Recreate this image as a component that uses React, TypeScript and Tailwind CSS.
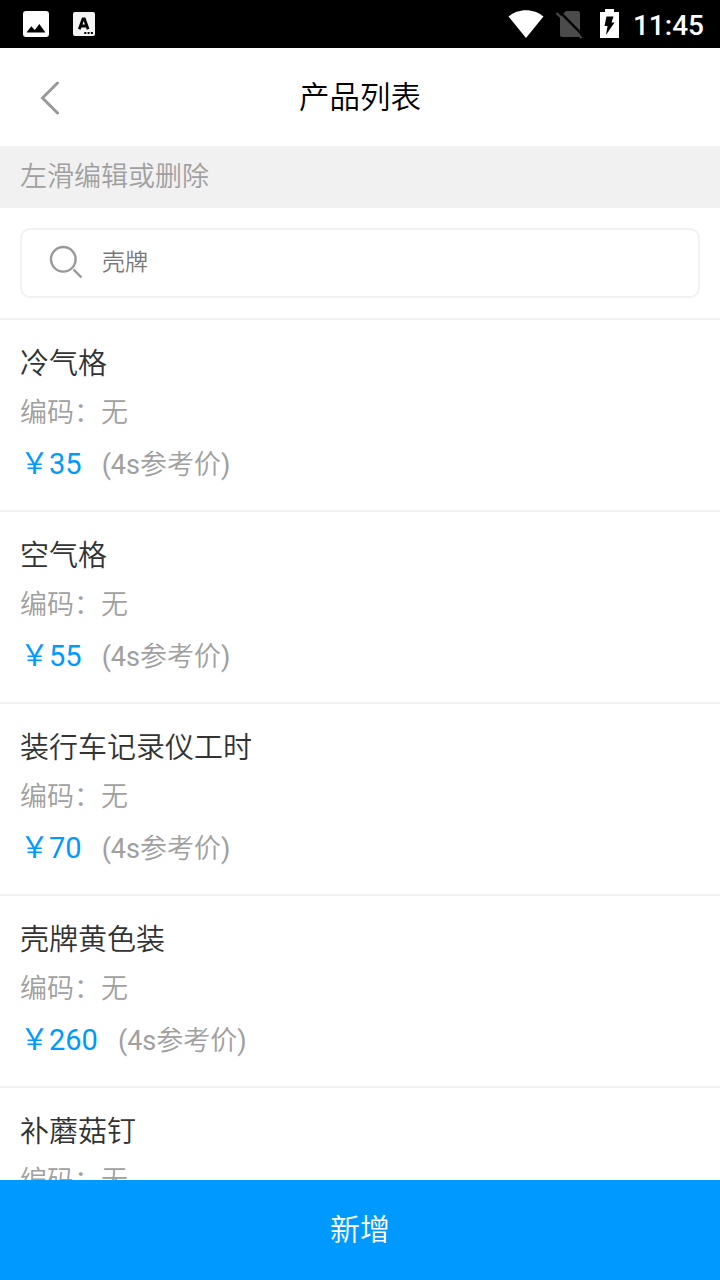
import { useState } from "react";

interface Product {
  id: number;
  name: string;
  code?: string;
  price: number;
}

const products: Product[] = [
  { id: 1, name: "冷气格", price: 35 },
  { id: 2, name: "空气格", price: 55 },
  { id: 3, name: "装行车记录仪工时", price: 70 },
  { id: 4, name: "壳牌黄色装", price: 260 },
  { id: 5, name: "补蘑菇钉", price: 120 },
];

const StatusBar = () => (
  <div className="flex h-12 shrink-0 items-center justify-between bg-black">
    <div className="flex items-center pl-[23px]">
      <svg width="26" height="26" viewBox="0 0 26 26">
        <rect width="26" height="26" rx="3" fill="#fff" />
        <path d="M3.5 21.5 8.3 15.2 11.8 19 16.3 13 22.5 21.5Z" fill="#000" />
      </svg>
      <svg className="ml-[24px]" width="22" height="24" viewBox="0 0 22 24">
        <rect width="22" height="24" rx="2" fill="#f4f4f4" />
        <path
          d="M6.3 17.3 10 6.8h1.4l3.7 10.5M7.5 14h6.5"
          fill="none"
          stroke="#000"
          strokeWidth="2.8"
        />
        <path d="M11.3 20h2v2h-2zM14.6 20h2v2h-2zM17.9 20h2v2h-2z" fill="#000" />
      </svg>
    </div>

    <div className="flex items-center pr-4">
      <svg width="36" height="30" viewBox="0 0 36 30">
        <path d="M.5 7.5C10-1 26-1 35.5 7.5L18 29Z" fill="#fff" />
      </svg>
      <svg className="ml-[11px]" width="28" height="30" viewBox="0 0 28 30">
        <path
          d="M11 2h11.5a2.5 2.5 0 0 1 2.5 2.5v21a2.5 2.5 0 0 1-2.5 2.5H7.5A2.5 2.5 0 0 1 5 25.5V8z"
          fill="#4b4b4b"
        />
        <path d="M3.5 1.5 28 26.5" stroke="#000" strokeWidth="2.5" />
        <path d="M1.5 4 26.5 29" stroke="#4b4b4b" strokeWidth="2.2" />
      </svg>
      <svg className="ml-[17px]" width="19" height="30" viewBox="0 0 19 30">
        <path d="M5 0h9v3h5v26H0V3h5z" fill="#fff" />
        <path d="M6.5 7.5h7l-2 6h3L6 26l1.5-9h-3z" fill="#000" />
      </svg>
      <span className="ml-[14px] pt-1 font-['Roboto',sans-serif] text-[28px] leading-[44px] font-medium text-white">
        11:45
      </span>
    </div>
  </div>
);

const ProductItem = ({ product }: { product: Product }) => (
  <li className="h-48 border-b-2 border-[#f1f1f1] px-5 pt-5">
    <div className="text-[29px] leading-[48px] font-[350] text-[#333]">{product.name}</div>
    <div className="text-[27px] leading-[50px] font-[350] text-[#a0a0a0]">
      编码：{product.code ?? "无"}
    </div>
    <div className="flex items-baseline leading-[52px]">
      <span className="text-[29px] text-[#0099ff]">￥{product.price}</span>
      <span className="ml-5 text-[27px] text-[#a0a0a0]">
        (4s<span className="font-[350]">参考价</span>)
      </span>
    </div>
  </li>
);

export default function App() {
  const [keyword, setKeyword] = useState("");

  return (
    <div className="flex h-[1280px] w-[720px] flex-col overflow-hidden bg-white font-['Roboto','Noto_Sans_CJK_SC',sans-serif]">
      <StatusBar />

      <header className="grid h-[98px] shrink-0 grid-cols-[100px_1fr_100px] items-center pt-0.5">
        <button className="flex justify-center">
          <svg width="20" height="34" viewBox="0 0 20 34" fill="none" stroke="#999" strokeWidth="3">
            <path d="M17.5 2 2.5 17l15 15" strokeLinecap="round" />
          </svg>
        </button>
        <h1 className="text-center text-[30.5px] font-[350] text-black">产品列表</h1>
      </header>

      <div className="h-[62px] shrink-0 bg-[#f1f1f1] px-5 text-[27px] leading-[62px] font-[350] text-[#a0a0a0]">
        左滑编辑或删除
      </div>

      <div className="shrink-0 border-b-2 border-[#f1f1f1] p-5">
        <label className="flex h-[70px] items-center rounded-[10px] border-2 border-[#f1f1f1] pl-[27px]">
          <svg
            className="mb-0.5"
            width="34"
            height="34"
            viewBox="0 0 34 34"
            fill="none"
            stroke="#999"
            strokeWidth="2.4"
          >
            <circle cx="14.3" cy="14.3" r="12.3" />
            <path d="m24.5 24.5 8 8" />
          </svg>
          <input
            value={keyword}
            onChange={(e) => setKeyword(e.target.value)}
            placeholder="壳牌"
            className="ml-[19px] flex-1 text-[23px] font-[350] outline-none placeholder:text-[#777]"
          />
        </label>
      </div>

      <ul className="min-h-0 flex-1 overflow-hidden">
        {products.map((p) => (
          <ProductItem key={p.id} product={p} />
        ))}
      </ul>

      <button className="h-[100px] shrink-0 bg-[#0099ff] pb-0.5 text-[30px] font-[350] text-white">
        新增
      </button>
    </div>
  );
}
